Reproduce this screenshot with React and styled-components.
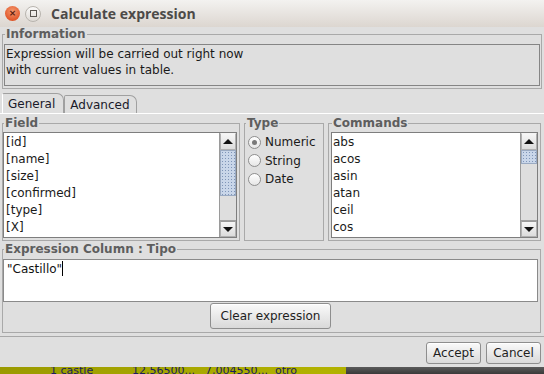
import React from "react";
import styled, { createGlobalStyle } from "styled-components";

const GlobalStyle = createGlobalStyle`
  html, body { margin: 0; padding: 0; background: #4a4a4a; }
  body { font-family: "DejaVu Sans", "Noto Sans", sans-serif; font-size: 12px; color: #1e1e1e; }
`;

const Window = styled.div`
  width: 544px;
  height: 374px;
  overflow: hidden;
  display: flex;
  flex-direction: column;
  background: #dfdfdf;
`;

const TitleBar = styled.div`
  height: 27px;
  flex: none;
  display: flex;
  align-items: center;
  padding-left: 5px;
  gap: 3px;
  background: linear-gradient(#f3f2f0, #dcd6d0);
`;

const CloseBtn = styled.div`
  width: 15px;
  height: 15px;
  border-radius: 50%;
  background: radial-gradient(circle at 50% 35%, #f59a70, #e2592c 70%, #c9471f);
  display: flex;
  align-items: center;
  justify-content: center;
  color: #5a2010;
  font-size: 9px;
  font-weight: bold;
  line-height: 1;
`;

const MaxBtn = styled.div`
  width: 14px;
  height: 14px;
  margin-left: 2px;
  border-radius: 50%;
  border: 1px solid #b8b4ae;
  background: linear-gradient(#fbfaf9, #dedad5);
  display: flex;
  align-items: center;
  justify-content: center;
  &::after {
    content: "";
    width: 5px;
    height: 5px;
    border: 1px solid #5a5652;
  }
`;

const Title = styled.div`
  margin-left: 7px;
  font-family: "Open Sans", "DejaVu Sans", sans-serif;
  font-weight: 700;
  font-size: 14px;
  color: #4c4a48;
`;

const Group = styled.fieldset`
  margin: ${(p) => p.$margin || "0"};
  padding: ${(p) => p.$pad || "0"};
  border: 1px solid #a9a9a9;
  min-width: 0;
  display: flex;
  flex-direction: column;
  flex: ${(p) => p.$flex || "none"};
  width: ${(p) => p.$w || "auto"};
  box-sizing: border-box;
`;

const Legend = styled.legend`
  margin-left: 1px;
  padding: 0 1px;
  font-weight: bold;
  font-size: 12px;
  line-height: 14px;
  color: #5e5e5e;
`;

const InfoText = styled.div`
  height: 42px;
  box-sizing: border-box;
  border: 1px solid #858585;
  padding: 1px 0 0 1px;
  line-height: 16px;
  color: #1a1a1a;
`;

const TabRow = styled.div`
  display: flex;
  margin-top: 4px;
  height: 20px;
  padding-left: 2px;
  align-items: flex-end;
`;

const Tab = styled.div`
  height: ${(p) => (p.$active ? "20px" : "18px")};
  box-sizing: border-box;
  padding: 0 ${(p) => (p.$active ? "8px" : "6px")} 0 5px;
  border: 1px solid #a0a0a0;
  border-bottom: none;
  border-left-color: ${(p) => (p.$active ? "#ffffff" : "#a0a0a0")};
  border-radius: 2px 7px 0 0;
  display: flex;
  align-items: center;
  line-height: 1;
  font-size: 12px;
  color: #1a1a2a;
  background: #dfdfdf;
`;

const TabPanel = styled.div`
  border-top: 1px solid #ffffff;
  border-bottom: 1px solid #a8a8a8;
  padding: 2px 3px 3px 2px;
  display: flex;
  flex-direction: column;
`;

const GroupRow = styled.div`
  display: flex;
  gap: 3px;
`;

const ListBox = styled.div`
  height: 106px;
  box-sizing: border-box;
  border: 1px solid #7e7e7e;
  background: #ffffff;
  display: flex;
  overflow: hidden;
`;

const Items = styled.div`
  flex: 1;
  padding: 1px 0 0 ${(p) => p.$indent || "2px"};
`;

const Item = styled.div`
  height: 17px;
  line-height: 17px;
  color: #1a1a1a;
  white-space: nowrap;
`;

const ScrollBar = styled.div`
  width: 16px;
  flex: none;
  display: flex;
  flex-direction: column;
  border-left: 1px solid #9a9a9a;
  background: #dedede;
`;

const Arrow = styled.div`
  height: ${(p) => p.$h || "17px"};
  flex: none;
  box-sizing: border-box;
  border: 1px solid #b0b0b0;
  border-top-color: ${(p) => (p.$down ? "#9a9a9a" : "#f4f4f4")};
  background: linear-gradient(#f6f6f6, #dcdcdc);
  display: flex;
  align-items: center;
  justify-content: center;
  &::after {
    content: "";
    border-left: 5px solid transparent;
    border-right: 5px solid transparent;
    ${(p) => (p.$down ? "border-top: 5px solid #111;" : "border-bottom: 5px solid #111;")}
  }
`;

const Thumb = styled.div`
  height: ${(p) => p.$h}px;
  flex: none;
  box-sizing: border-box;
  border: 1px solid #9aaac2;
  background-color: #c9d6e9;
  background-image: radial-gradient(circle, #7f95b8 0.7px, transparent 0.9px);
  background-size: 3px 3px;
`;

const Track = styled.div`
  flex: 1;
  border-bottom: 1px solid #a0a0a0;
`;

const RadioList = styled.div`
  display: flex;
  flex-direction: column;
  padding: 3px 0 0 3px;
`;

const RadioRow = styled.label`
  height: 18.5px;
  display: flex;
  align-items: center;
  gap: 4px;
  color: #1a1a1a;
`;

const RadioDot = styled.span`
  width: 13px;
  height: 13px;
  box-sizing: border-box;
  border-radius: 50%;
  border: 1px solid #8e8e8e;
  background: linear-gradient(#ffffff, #e6e6e6);
  display: flex;
  align-items: center;
  justify-content: center;
  &::after {
    content: "";
    width: 5px;
    height: 5px;
    border-radius: 50%;
    background: ${(p) => (p.$on ? "#7a7a7a" : "transparent")};
  }
`;

const ExprArea = styled.div`
  height: 43px;
  box-sizing: border-box;
  border: 1px solid #8a8a8a;
  background: #ffffff;
  padding: 1px 0 0 3px;
  line-height: 17px;
  color: #111;
`;

const Caret = styled.span`
  display: inline-block;
  width: 1px;
  height: 15px;
  background: #000;
  vertical-align: -3px;
`;

const Button = styled.button`
  font-family: "DejaVu Sans", sans-serif;
  font-size: 12px;
  color: #1e1e1e;
  height: ${(p) => p.$h || "22px"};
  width: ${(p) => p.$w};
  padding: 0;
  border: 1px solid #8e8e8e;
  border-radius: 3px;
  background: linear-gradient(#fafafa, #d9d9d9);
  box-shadow: inset 0 1px 0 #ffffff;
`;

const Center = styled.div`
  display: flex;
  justify-content: center;
  margin-top: 1px;
`;

const Footer = styled.div`
  height: 30px;
  flex: none;
  display: flex;
  justify-content: flex-end;
  align-items: flex-start;
  gap: 5px;
  padding: 5px 3px 0 0;
  box-sizing: border-box;
`;

const Strip = styled.div`
  flex: 1;
  display: flex;
  overflow: hidden;
  background: linear-gradient(90deg, #9a9a00, #b2b200 60%, #a8a800);
`;

const StripCells = styled.div`
  width: 346px;
  flex: none;
  display: flex;
  padding-left: 50px;
  box-sizing: border-box;
  margin-top: -3px;
  font-size: 11px;
  line-height: 13px;
  color: #1a1e60;
  white-space: nowrap;
`;

const Cell = styled.span`
  width: ${(p) => p.$w || "auto"};
  flex: none;
`;

const StripRest = styled.div`
  flex: 1;
  background: linear-gradient(#5a5a5a, #3a3a3a);
`;

const fields = ["[id]", "[name]", "[size]", "[confirmed]", "[type]", "[X]"];
const commands = ["abs", "acos", "asin", "atan", "ceil", "cos"];
const types = [
  { label: "Numeric", on: true },
  { label: "String", on: false },
  { label: "Date", on: false },
];

const Scroll = ({ thumbTop, thumbH }) => (
  <ScrollBar>
    <Arrow />
    <Thumb $h={thumbH} style={{ marginTop: thumbTop }} />
    <Track />
    <Arrow $down $h="16px" />
  </ScrollBar>
);

export default function App() {
  return (
    <Window>
      <GlobalStyle />
      <TitleBar>
        <CloseBtn>×</CloseBtn>
        <MaxBtn />
        <Title>Calculate expression</Title>
      </TitleBar>

      <Group $margin="0 2px 0 2px" $pad="3px 1px 2px 1px">
        <Legend>Information</Legend>
        <InfoText>
          Expression will be carried out right now
          <br />
          with current values in table.
        </InfoText>
      </Group>

      <TabRow>
        <Tab $active>General</Tab>
        <Tab>Advanced</Tab>
      </TabRow>

      <TabPanel>
        <GroupRow>
          <Group $w="238px" $pad="2px 2px 2px 0">
            <Legend>Field</Legend>
            <ListBox>
              <Items>
                {fields.map((f) => (
                  <Item key={f}>{f}</Item>
                ))}
              </Items>
              <Scroll thumbTop={0} thumbH={46} />
            </ListBox>
          </Group>
          <Group $w="80px" $pad="0 0 2px 0" $margin="0 1px 0 1px">
            <Legend>Type</Legend>
            <RadioList>
              {types.map((t) => (
                <RadioRow key={t.label}>
                  <RadioDot $on={t.on} />
                  {t.label}
                </RadioRow>
              ))}
            </RadioList>
          </Group>
          <Group $flex="1" $pad="2px 2px 2px 2px">
            <Legend>Commands</Legend>
            <ListBox>
              <Items $indent="1px">
                {commands.map((c) => (
                  <Item key={c}>{c}</Item>
                ))}
              </Items>
              <Scroll thumbTop={0} thumbH={14} />
            </ListBox>
          </Group>
        </GroupRow>

        <Group $margin="1px 0 0 0" $pad="3px 2px 3px 0">
          <Legend>Expression Column : Tipo</Legend>
          <ExprArea>
            "Castillo"
            <Caret />
          </ExprArea>
          <Center>
            <Button $w="121px" $h="26px">Clear expression</Button>
          </Center>
        </Group>
      </TabPanel>

      <Footer>
        <Button $w="55px">Accept</Button>
        <Button $w="55px">Cancel</Button>
      </Footer>

      <Strip>
        <StripCells>
          <Cell $w="82px">1 castle</Cell>
          <Cell $w="73px">12,56500...</Cell>
          <Cell $w="70px">7,004550...</Cell>
          <Cell>otro</Cell>
        </StripCells>
        <StripRest />
      </Strip>
    </Window>
  );
}
